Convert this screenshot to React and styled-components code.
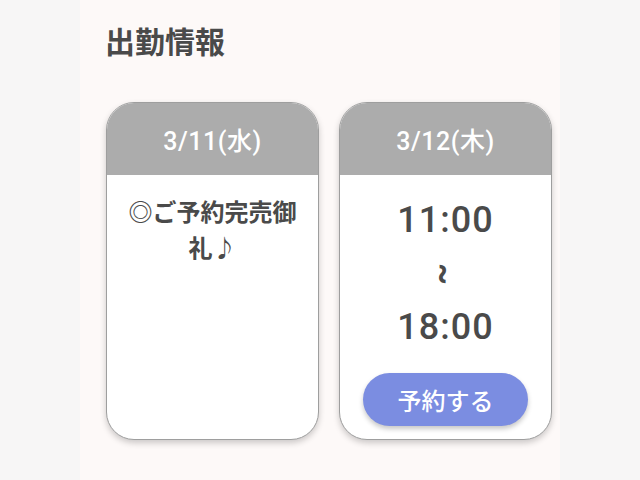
import React from "react";
import styled, { createGlobalStyle } from "styled-components";

const GlobalStyle = createGlobalStyle`
    body {
        margin: 0;
        background-color: #f7f6f6;
        font-family: Roboto, "Noto Sans CJK JP", sans-serif;
        color: #444;
    }
`;

const Page = styled.main`
    width: 480px;
    min-height: 480px;
    margin: 0 auto;
    padding: 18px 0 0 25px;
    box-sizing: border-box;
    background-color: #fdf9f8;
`;

const Title = styled.h2`
    margin: 0;
    font-family: "Noto Sans CJK JP", sans-serif;
    font-size: 30px;
    line-height: 44px;
    font-weight: 700;
    color: #4a4a4a;
`;

const CardRow = styled.section`
    display: flex;
    gap: 20px;
    margin-top: 40px;
    padding-left: 1px;
`;

const Card = styled.article`
    width: 213px;
    height: 338px;
    box-sizing: border-box;
    display: flex;
    flex-direction: column;
    overflow: hidden;

    background-color: #fff;
    border: 1.5px solid #9e9e9e;
    border-radius: 28px;
    box-shadow: 0 3px 6px rgba(0, 0, 0, 0.2);
`;

const CardHead = styled.header`
    height: 72px;
    flex-shrink: 0;
    display: flex;
    align-items: center;
    justify-content: center;

    background-color: #acacac;
    color: #fff;
    font-size: 25px;
    font-weight: 500;
    letter-spacing: 0.5px;
`;

const CardBody = styled.div`
    flex: 1;
    display: flex;
    flex-direction: column;
    align-items: center;
    padding: ${(props) => props.pt || 18}px 12px 0;
    text-align: center;
`;

const Note = styled.p`
    margin: 0;
    font-family: "Noto Sans CJK JP", sans-serif;
    font-size: 24px;
    line-height: 36px;
    font-weight: 700;
    color: #4a4a4a;
`;

const Time = styled.div`
    font-size: 36px;
    line-height: 52px;
    font-weight: 500;
    letter-spacing: 1px;
    color: #4a4a4a;
`;

const Tilde = styled.div`
    height: 55px;
    display: flex;
    align-items: center;
    justify-content: center;
    font-size: 34px;
    font-weight: 700;
    color: #4a4a4a;

    span {
        display: inline-block;
        transform: rotate(90deg);
    }
`;

const ReserveButton = styled.button`
    margin-top: 20px;
    width: 165px;
    height: 53px;
    border: none;
    border-radius: 27px;

    background-color: #7b8de1;
    color: #fff;
    font-family: "Noto Sans CJK JP", sans-serif;
    font-size: 24px;
    font-weight: 500;
    box-shadow: 0 3px 5px rgba(0, 0, 0, 0.22);
`;

const schedule = [
    { date: "3/11(水)", note: "◎ご予約完売御礼♪" },
    { date: "3/12(木)", start: "11:00", end: "18:00" },
];

const App = () => {
    return (
        <>
            <GlobalStyle />
            <Page>
                <Title>出勤情報</Title>

                <CardRow>
                    {schedule.map((day) => (
                        <Card key={day.date}>
                            <CardHead>{day.date}</CardHead>
                            {day.note ? (
                                <CardBody>
                                    <Note>{day.note}</Note>
                                </CardBody>
                            ) : (
                                <CardBody pt="19">
                                    <Time>{day.start}</Time>
                                    <Tilde><span>~</span></Tilde>
                                    <Time>{day.end}</Time>
                                    <ReserveButton>予約する</ReserveButton>
                                </CardBody>
                            )}
                        </Card>
                    ))}
                </CardRow>
            </Page>
        </>
    );
};

export default App;
